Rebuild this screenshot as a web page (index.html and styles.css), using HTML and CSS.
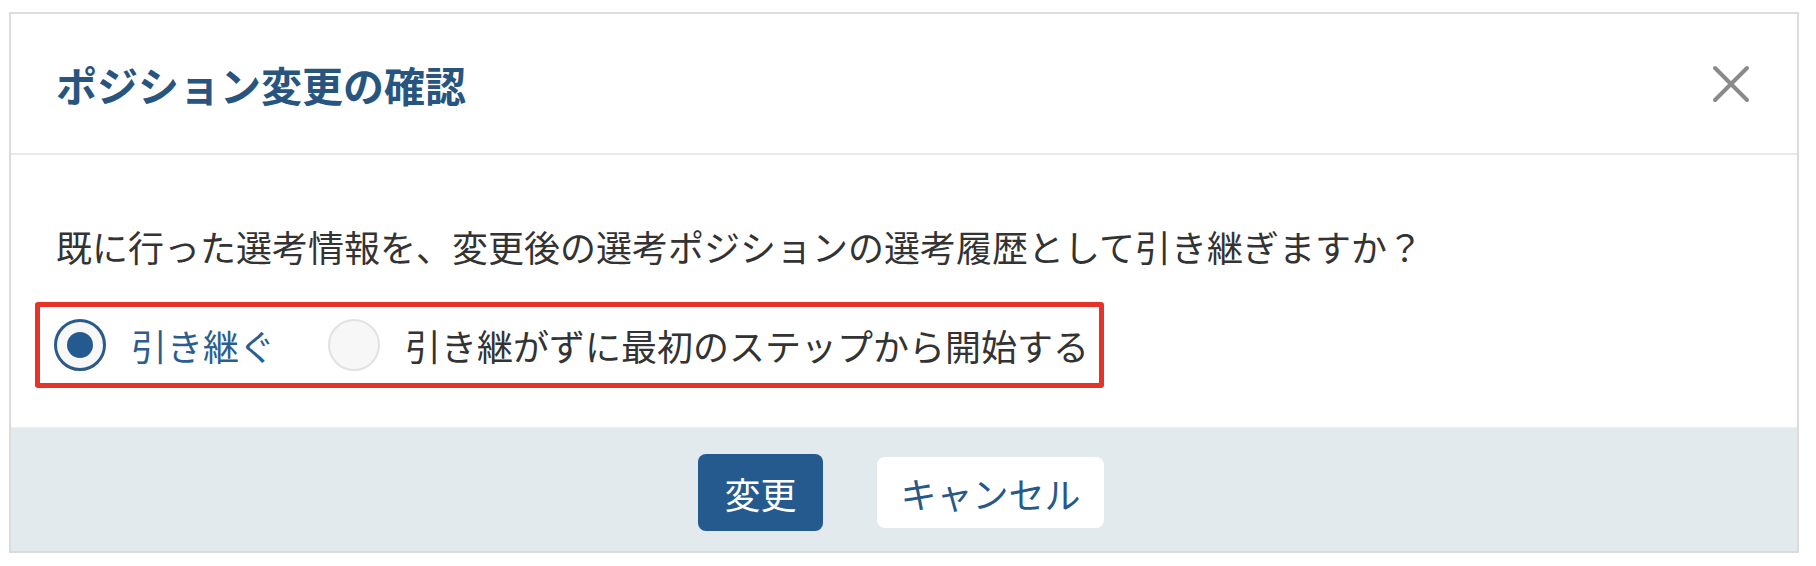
FILE: index.html
```html
<!DOCTYPE html>
<html lang="ja">
<head>
  <meta charset="UTF-8">
  <meta name="viewport" content="width=device-width, initial-scale=1.0">
  <title>ポジション変更の確認</title>
  <link rel="stylesheet" href="styles.css">
</head>
<body>
  <div class="modal">
    <div class="modal-header">
      <h2 class="modal-title">ポジション変更の確認</h2>
      <button class="close-btn" type="button" aria-label="閉じる">
        <svg width="38" height="38" viewBox="0 0 38 38">
          <path d="M3 3 L35 35 M35 3 L3 35" stroke="#8a8a8a" stroke-width="4" stroke-linecap="round" fill="none" />
        </svg>
      </button>
    </div>

    <div class="modal-body">
      <p class="message">既に行った選考情報を、変更後の選考ポジションの選考履歴として引き継ぎますか？</p>
      <div class="choice-group">
        <label class="choice checked">
          <input type="radio" name="history" value="keep" checked>
          <span>引き継ぐ</span>
        </label>
        <label class="choice">
          <input type="radio" name="history" value="reset">
          <span>引き継がずに最初のステップから開始する</span>
        </label>
      </div>
    </div>

    <div class="modal-footer">
      <button class="btn btn-primary" type="button">変更</button>
      <button class="btn btn-cancel" type="button">キャンセル</button>
    </div>
  </div>
</body>
</html>
```

FILE: styles.css
```css
/* General Styles */
body {
  font-family: "Noto Sans CJK JP", "Noto Sans", sans-serif;
  background-color: #fff;
  color: #333;
  margin: 0;
  padding: 0;
}

.modal {
  width: 1790px;
  margin: 12px 0 0 9px;
  border: 2px solid #dcdcdc;
  background-color: #fff;
  box-sizing: border-box;
}

/* Header */
.modal-header {
  height: 139px;
  padding: 0 47px 0 45px;
  display: flex;
  align-items: center;
  justify-content: space-between;
  border-bottom: 2px solid #e9e9e9;
}

.modal-title {
  margin: 0;
  font-size: 41px;
  font-weight: 700;
  color: #28557f;
}

.close-btn {
  padding: 0;
  border: none;
  background: none;
  display: flex;
  cursor: pointer;
}

/* Body */
.modal-body {
  padding: 64px 45px 39px;
}

.message {
  margin: 0 0 29px;
  font-size: 36px;
  line-height: 54px;
}

.choice-group {
  display: inline-flex;
  align-items: center;
  gap: 53px;
  height: 76px;
  margin-left: -21px;
  padding: 0 10px 0 14px;
  border: 5px solid #e6332a;
  border-radius: 3px;
}

.choice {
  display: flex;
  align-items: center;
  gap: 25px;
  font-size: 36px;
  cursor: pointer;
}

.choice input {
  appearance: none;
  margin: 0;
  width: 52px;
  height: 52px;
  border: 2px solid #e2e2e2;
  border-radius: 50%;
  background-color: #f7f7f7;
  display: flex;
  align-items: center;
  justify-content: center;
}

.choice input:checked {
  border: 3px solid #2a5a8c;
}

.choice input:checked::after {
  content: "";
  width: 26px;
  height: 26px;
  border-radius: 50%;
  background-color: #245a8f;
}

.choice.checked span {
  color: #2b5d8f;
}

/* Footer */
.modal-footer {
  display: flex;
  justify-content: center;
  align-items: center;
  gap: 54px;
  padding: 26px 6px 20px 0;
  background-color: #e3eaee;
  border-top: 1px solid #edf0f2;
}

.btn {
  font-family: inherit;
  font-size: 36px;
  border: none;
  border-radius: 8px;
  cursor: pointer;
}

.btn-primary {
  width: 125px;
  height: 77px;
  background-color: #255a8f;
  color: #fff;
}

.btn-cancel {
  width: 227px;
  height: 71px;
  background-color: #fff;
  color: #27588a;
}
```
